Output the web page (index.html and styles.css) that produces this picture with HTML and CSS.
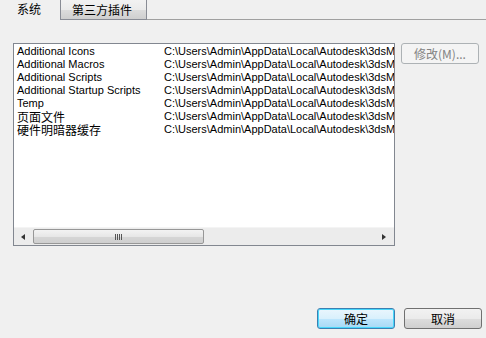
FILE: index.html
```html
<!DOCTYPE html>
<html lang="zh-CN">

<head>
    <meta charset="UTF-8">
    <title>路径配置</title>
    <link rel="stylesheet" href="styles.css">
</head>

<body>

    <div class="dialog">
        <div class="tabs">
            <div class="tab active">系统</div>
            <div class="tab">第三方插件</div>
            <div class="tab-fill"></div>
        </div>

        <div class="panel">
            <div class="listbox">
                <div class="rows">
                    <div class="row"><span class="name">Additional Icons</span><span class="path">C:\Users\Admin\AppData\Local\Autodesk\3dsMax\2014 - 64bit\CHS\usericons</span></div>
                    <div class="row"><span class="name">Additional Macros</span><span class="path">C:\Users\Admin\AppData\Local\Autodesk\3dsMax\2014 - 64bit\CHS\usermacros</span></div>
                    <div class="row"><span class="name">Additional Scripts</span><span class="path">C:\Users\Admin\AppData\Local\Autodesk\3dsMax\2014 - 64bit\CHS\userscripts</span></div>
                    <div class="row"><span class="name">Additional Startup Scripts</span><span class="path">C:\Users\Admin\AppData\Local\Autodesk\3dsMax\2014 - 64bit\CHS\userscripts\startup</span></div>
                    <div class="row"><span class="name">Temp</span><span class="path">C:\Users\Admin\AppData\Local\Autodesk\3dsMax\2014 - 64bit\CHS\temp</span></div>
                    <div class="row"><span class="name cjk">页面文件</span><span class="path">C:\Users\Admin\AppData\Local\Autodesk\3dsMax\2014 - 64bit\CHS\temp</span></div>
                    <div class="row"><span class="name cjk">硬件明暗器缓存</span><span class="path">C:\Users\Admin\AppData\Local\Autodesk\3dsMax\2014 - 64bit\CHS\temp</span></div>
                </div>
                <div class="hscroll">
                    <div class="arrow left"></div>
                    <div class="track">
                        <div class="thumb"><span class="grip"></span></div>
                    </div>
                    <div class="arrow right"></div>
                </div>
            </div>
            <button class="btn" disabled>修改(M)...</button>
        </div>

        <div class="footer">
            <button class="btn default">确定</button>
            <button class="btn">取消</button>
        </div>
    </div>

</body>

</html>
```

FILE: styles.css
```css
body {
    margin: 0;
    background-color: #f0f0f0;
    font-family: "Liberation Sans", "Noto Sans CJK SC", sans-serif;
    font-size: 11px;
    color: #000;
}

.dialog {
    width: 486px;
    height: 338px;
    display: flex;
    flex-direction: column;
}

.tabs {
    display: flex;
    height: 20px;
}

.tab {
    font-family: "Noto Sans CJK SC", sans-serif;
    font-size: 12px;
    line-height: 19px;
    box-sizing: border-box;
}

.tab.active {
    width: 60px;
    padding-left: 17px;
    line-height: 18px;
}

.tab:not(.active) {
    width: 87px;
    height: 20px;
    padding-left: 11px;
    border: 1px solid #898c95;
    border-top: none;
    background: linear-gradient(#f2f2f2, #ebebeb 50%, #dddddd 51%, #cfcfcf);
}

.tab-fill {
    flex: 1;
    border-bottom: 1px solid #a0a0a0;
    height: 19px;
}

.panel {
    display: flex;
    align-items: flex-start;
    padding: 23px 0 0 13px;
}

.listbox {
    width: 382px;
    height: 203px;
    box-sizing: border-box;
    border: 1px solid #828790;
    background: #fff;
    display: flex;
    flex-direction: column;
}

.rows {
    flex: 1;
    overflow: hidden;
    padding-top: 1px;
}

.row {
    display: flex;
    height: 13px;
    line-height: 13px;
    white-space: nowrap;
    overflow: hidden;
}

.name {
    width: 147px;
    padding-left: 3px;
    flex-shrink: 0;
}

.name.cjk {
    font-family: "Noto Sans CJK SC", sans-serif;
    font-size: 12px;
}

.path {
    overflow: hidden;
}

.hscroll {
    height: 17px;
    display: flex;
    background: #ececec;
    border-top: 1px solid #f4f4f4;
}

.arrow {
    width: 17px;
    display: flex;
    align-items: center;
    justify-content: center;
}

.arrow.right {
    width: 21px;
}

.arrow::before {
    content: "";
    border-top: 3px solid transparent;
    border-bottom: 3px solid transparent;
}

.arrow.left::before {
    border-right: 4px solid #333;
}

.arrow.right::before {
    border-left: 4px solid #333;
}

.track {
    flex: 1;
    padding: 1px 0 1px 2px;
}

.thumb {
    width: 171px;
    height: 15px;
    box-sizing: border-box;
    border: 1px solid #979797;
    border-radius: 2px;
    background: linear-gradient(#f3f3f3, #e7e7e7 50%, #d6d6d6 51%, #cfcfcf);
    display: flex;
    align-items: center;
    justify-content: center;
}

.grip {
    width: 7px;
    height: 6px;
    background: repeating-linear-gradient(90deg, #555 0 1px, transparent 1px 2px);
}

.btn {
    font-family: "Noto Sans CJK SC", sans-serif;
    font-size: 12px;
    height: 21px;
    padding: 0;
    border: 1px solid #707070;
    border-radius: 3px;
    background: linear-gradient(#f2f2f2, #ebebeb 50%, #dddddd 51%, #cfcfcf);
    color: #000;
}

.panel .btn {
    width: 78px;
    margin-left: 6px;
    border-color: #adb2b5;
    background: #f4f4f4;
    color: #838383;
    white-space: nowrap;
}

.footer {
    margin-top: auto;
    display: flex;
    justify-content: flex-end;
    gap: 9px;
    padding: 0 4px 9px 0;
}

.footer .btn {
    width: 78px;
}

.btn.default {
    border-color: #3c7fb1;
    box-shadow: inset 0 0 0 1px #48d7fb;
    background: linear-gradient(#eaf6fd, #d9f0fc 50%, #bee6fd 51%, #a7d9f5);
}
```
